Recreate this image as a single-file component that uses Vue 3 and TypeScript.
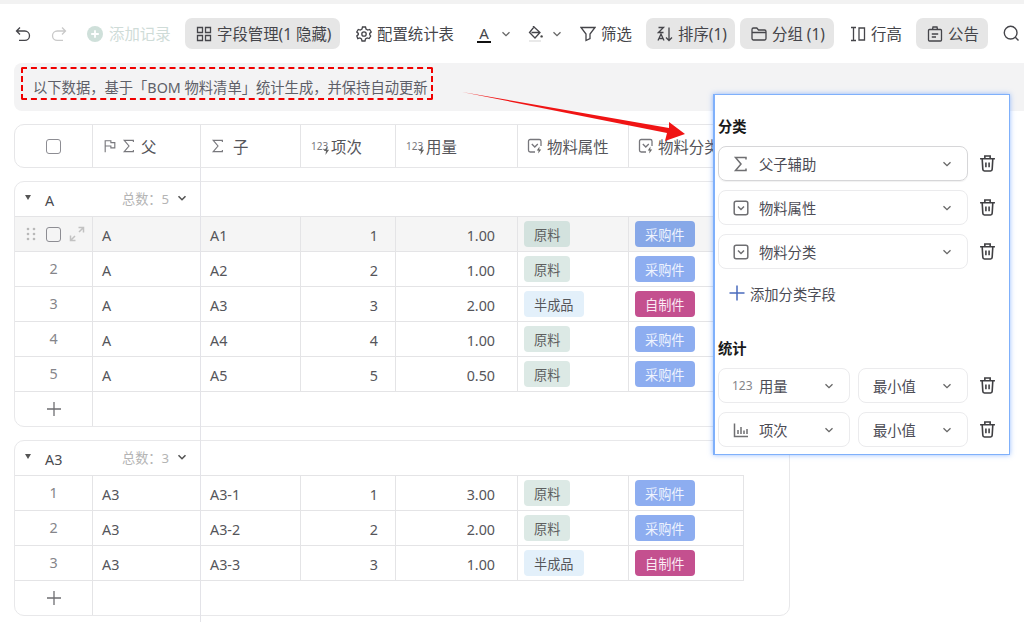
<template>
  <div class="page">
    <!-- Barra de ferramentas -->
    <header class="toolbar">
      <svg class="ico undo" viewBox="0 0 16 16"><path :d="icons.undo" /></svg>
      <svg class="ico redo off" viewBox="0 0 16 16"><path :d="icons.redo" /></svg>
      <span class="tb-add">
        <svg class="ico" viewBox="0 0 16 16"><circle cx="8" cy="8" r="8" fill="#cfe0da" stroke="none" /><path d="M8 4.200v7.600M4.200 8h7.600" stroke="#fff" stroke-width="1.800" /></svg>
        添加记录
      </span>
      <span class="tb-btn on fields">
        <svg class="ico" viewBox="0 0 16 16"><path :d="icons.grid" /></svg>
        字段管理(1 隐藏)
      </span>
      <span class="tb-btn config">
        <svg class="ico" viewBox="0 0 16 16"><path :d="icons.gear" /><circle cx="8" cy="8" r="2.200" /></svg>
        配置统计表
      </span>
      <span class="tb-color">
        <span class="letter-a">A</span>
        <svg class="chev" viewBox="0 0 10 10"><path d="M1.500 3.200 5 6.700l3.500-3.500" /></svg>
      </span>
      <span class="tb-color bucket">
        <svg class="ico" viewBox="0 0 16 16"><path :d="icons.bucket" /><path d="M1 15h12" stroke="#ddd" /><circle cx="13.600" cy="10.400" r="1.200" fill="#444" stroke="none" /></svg>
        <svg class="chev" viewBox="0 0 10 10"><path d="M1.500 3.200 5 6.700l3.500-3.500" /></svg>
      </span>
      <span class="tb-btn filter">
        <svg class="ico" viewBox="0 0 16 16"><path :d="icons.filter" /></svg>
        筛选
      </span>
      <span class="tb-btn on sort">
        <svg class="ico" viewBox="0 0 16 16"><path :d="icons.sort" /></svg>
        排序(1)
      </span>
      <span class="tb-btn on grouping">
        <svg class="ico" viewBox="0 0 16 16"><path :d="icons.folder" /></svg>
        分组 (1)
      </span>
      <span class="tb-btn height">
        <svg class="ico" viewBox="0 0 16 16"><path :d="icons.rowHeight" /></svg>
        行高
      </span>
      <span class="tb-btn on notice-btn">
        <svg class="ico" viewBox="0 0 16 16"><path :d="icons.notice" /></svg>
        公告
      </span>
      <svg class="ico search" viewBox="0 0 16 16"><circle cx="7.200" cy="7.200" r="6" /><path d="m11.600 11.600 3 3" /></svg>
    </header>

    <!-- Aviso -->
    <div class="notice">
      <span class="notice-text">以下数据，基于「BOM 物料清单」统计生成，并保持自动更新</span>
    </div>

    <!-- Tabela -->
    <section class="table">
      <div class="freeze"></div>

      <div class="thead">
        <div class="th center"><span class="check"></span></div>
        <div class="th">
          <svg class="ico-sm" viewBox="0 0 16 16"><path d="M2.500 15V2h6.500v2.200h4.500v6H9V8H2.500" /></svg>
          <svg class="ico-sm" viewBox="0 0 16 16"><path :d="icons.sigma" /></svg>
          <span>父</span>
        </div>
        <div class="th">
          <svg class="ico-sm" viewBox="0 0 16 16"><path :d="icons.sigma" /></svg>
          <span class="th-gap">子</span>
        </div>
        <div v-for="h in numHeads" :key="h" class="th">
          <span class="num-ico">123<svg viewBox="0 0 8 10"><path d="M5 0 1 5.600h2.400L2.800 10 7 4.200H4.400z" /></svg></span>
          {{ h }}
        </div>
        <div v-for="h in tagHeads" :key="h" class="th">
          <span class="sel-ico">
            <svg class="ico-sm" viewBox="0 0 16 16"><path d="M8 14H3.200A1.700 1.700 0 0 1 1.500 12.300V3.200A1.700 1.700 0 0 1 3.200 1.500h9.100A1.700 1.700 0 0 1 14 3.200V8M4.800 6 7.800 9l3-3" /><path class="bolt" d="M12.500 8.500 9.800 12.400h1.800l-.4 3.200 3-4.200h-1.900z" /></svg>
          </span>
          {{ h }}
        </div>
      </div>

      <div v-for="g in groups" :key="g.name" class="group">
        <div class="group-head">
          <div class="group-title">
            <span class="tri"></span>
            <span class="group-name">{{ g.name }}</span>
            <span class="group-total">总数：{{ g.rows.length }}</span>
            <svg class="chev dark" viewBox="0 0 10 10"><path d="M1.500 3.200 5 6.700l3.500-3.500" /></svg>
          </div>
        </div>

        <div
          v-for="(r, i) in g.rows"
          :key="r.child"
          class="row"
          :class="{ hover: g.name === 'A' && i === 0 }"
        >
          <div v-if="g.name === 'A' && i === 0" class="td first-hover">
            <svg class="dots" viewBox="0 0 10 14"><g fill="#b9b9b9"><circle cx="2" cy="2" r="1.300" /><circle cx="8" cy="2" r="1.300" /><circle cx="2" cy="7" r="1.300" /><circle cx="8" cy="7" r="1.300" /><circle cx="2" cy="12" r="1.300" /><circle cx="8" cy="12" r="1.300" /></g></svg>
            <span class="check"></span>
            <svg class="expand" viewBox="0 0 16 16"><path d="M9.500 1.500h5v5M14.500 1.500 10 6M6.500 14.500h-5v-5M1.500 14.500 6 10" /></svg>
          </div>
          <div v-else class="td seq">{{ i + 1 }}</div>
          <div class="td txt">{{ r.parent }}</div>
          <div class="td txt">{{ r.child }}</div>
          <div class="td txt right item">{{ r.item }}</div>
          <div class="td txt right qty">{{ r.qty.toFixed(2) }}</div>
          <div class="td"><span class="tag" :class="r.attr === '原料' ? 'tag-raw' : 'tag-semi'">{{ r.attr }}</span></div>
          <div class="td"><span class="tag" :class="r.kind === '采购件' ? 'tag-buy' : 'tag-make'">{{ r.kind }}</span></div>
        </div>

        <div class="add-row">
          <div class="add-cell"><svg class="plus" viewBox="0 0 16 16"><path d="M8 1v14M1 8h14" /></svg></div>
        </div>
      </div>
    </section>

    <!-- Seta da anotação -->
    <svg class="arrow" viewBox="0 0 240 60" width="240" height="60">
      <path d="M1 4 208 40v-6l16 12-20 7 2-8z" />
    </svg>

    <!-- Painel de configuração -->
    <aside class="panel">
      <h3 class="panel-title">分类</h3>
      <div v-for="(c, i) in categories" :key="c.label" class="panel-row">
        <div class="select wide" :class="{ active: i === 0 }">
          <svg v-if="c.sigma" class="sel-icon" viewBox="0 0 16 16"><path :d="icons.sigma" /></svg>
          <svg v-else class="sel-icon" viewBox="0 0 16 16"><rect x="1.200" y="1.200" width="13.600" height="13.600" rx="2" /><path d="m5 6.500 3 3 3-3" /></svg>
          <span class="sel-label">{{ c.label }}</span>
          <svg class="chev" viewBox="0 0 10 10"><path d="M1.500 3.200 5 6.700l3.500-3.500" /></svg>
        </div>
        <svg class="trash" viewBox="0 0 16 16"><path :d="icons.trash" /></svg>
      </div>
      <div class="panel-add">
        <svg class="add-plus" viewBox="0 0 16 16"><path d="M8 .5v15M.5 8h15" /></svg>
        添加分类字段
      </div>

      <h3 class="panel-title stat">统计</h3>
      <div v-for="s in stats" :key="s.label" class="panel-row">
        <div class="select field">
          <span v-if="s.num" class="sel-num">123</span>
          <svg v-else class="sel-icon" viewBox="0 0 16 16"><path d="M1.500 1.500v13h13.500M5 8v4M8 5v7M11 8.500V12M14 7v5" /></svg>
          <span class="sel-label">{{ s.label }}</span>
          <svg class="chev" viewBox="0 0 10 10"><path d="M1.500 3.200 5 6.700l3.500-3.500" /></svg>
        </div>
        <div class="select agg">
          <span class="sel-label">最小值</span>
          <svg class="chev" viewBox="0 0 10 10"><path d="M1.500 3.200 5 6.700l3.500-3.500" /></svg>
        </div>
        <svg class="trash" viewBox="0 0 16 16"><path :d="icons.trash" /></svg>
      </div>
    </aside>
  </div>
</template>

<script setup lang="ts">
interface Row {
  parent: string
  child: string
  item: number
  qty: number
  attr: string
  kind: string
}

interface Group {
  name: string
  rows: Row[]
}

const icons = {
  undo: 'M5 1.500 1.500 5 5 8.500M1.500 5h8.300a4.700 4.700 0 0 1 0 9.400H4',
  redo: 'M11 1.500 14.500 5 11 8.500M14.500 5H6.200a4.700 4.700 0 0 0 0 9.400H12',
  grid: 'M1.500 1.500h5v5h-5zM9.500 1.500h5v5h-5zM1.500 9.500h5v5h-5zM9.500 9.500h5v5h-5z',
  gear: 'M6.500 1h3l.5 2 1.700 1 2-.6 1.500 2.600-1.500 1.400v1.200L14.700 10l-1.500 2.600-2-.6-1.700 1-.5 2h-3l-.5-2-1.700-1-2 .6L.8 10l1.500-1.400V7.400L.8 6l1.500-2.600 2 .6L6 3z',
  bucket: 'M6 1 1.500 6.500 7 12l5-5.500zM3.500 6.500h8M6 1 5 0',
  filter: 'M1 1.500h14L10 8v4.500l-4 2V8z',
  sort: 'M1.500 1.500h5l-5 5h5M1 14.500 4 8l3 6.500M2 12.500h4M12 1.500v13M9 11.500l3 3 3-3',
  folder: 'M1 3.500A1.500 1.500 0 0 1 2.500 2h3.300l1.700 2h6A1.500 1.500 0 0 1 15 5.500v7a1.500 1.500 0 0 1-1.500 1.500h-11A1.500 1.500 0 0 1 1 12.500zM1 6.500h14',
  rowHeight: 'M1 1.500h5M1 14.500h5M3.500 1.500v13M9 2h5.500v12H9z',
  notice: 'M2.500 3.500h11a1 1 0 0 1 1 1v9.500a1 1 0 0 1-1 1h-11a1 1 0 0 1-1-1V4.500a1 1 0 0 1 1-1zM5.500 3.500 6 1h4l.5 2.500M4.800 8h6.400M4.800 11h4.200',
  sigma: 'M13 3.500V1.500H2.500L8 8l-5.500 6.500H13v-2',
  trash: 'M1 3.500h14M5.500 3.500V1h5v2.500M3 3.500l.6 10a1.500 1.500 0 0 0 1.500 1.500h5.800a1.500 1.500 0 0 0 1.500-1.500l.6-10M6.500 7v4.500M9.500 7v4.500',
}

const numHeads = ['项次', '用量']
const tagHeads = ['物料属性', '物料分类']

const groups: Group[] = [
  {
    name: 'A',
    rows: [
      { parent: 'A', child: 'A1', item: 1, qty: 1, attr: '原料', kind: '采购件' },
      { parent: 'A', child: 'A2', item: 2, qty: 1, attr: '原料', kind: '采购件' },
      { parent: 'A', child: 'A3', item: 3, qty: 2, attr: '半成品', kind: '自制件' },
      { parent: 'A', child: 'A4', item: 4, qty: 1, attr: '原料', kind: '采购件' },
      { parent: 'A', child: 'A5', item: 5, qty: 0.5, attr: '原料', kind: '采购件' },
    ],
  },
  {
    name: 'A3',
    rows: [
      { parent: 'A3', child: 'A3-1', item: 1, qty: 3, attr: '原料', kind: '采购件' },
      { parent: 'A3', child: 'A3-2', item: 2, qty: 2, attr: '原料', kind: '采购件' },
      { parent: 'A3', child: 'A3-3', item: 3, qty: 1, attr: '半成品', kind: '自制件' },
    ],
  },
]

const categories = [
  { label: '父子辅助', sigma: true },
  { label: '物料属性', sigma: false },
  { label: '物料分类', sigma: false },
]

const stats = [
  { label: '用量', num: true },
  { label: '项次', num: false },
]
</script>

<style>
html,
body {
  margin: 0;
  background: #fff;
}
</style>

<style scoped>
.page {
  position: relative;
  width: 1024px;
  height: 622px;
  overflow: hidden;
  border-top: 4px solid #f2f2f2;
  box-sizing: border-box;
  background: #fff;
  font-family: 'Noto Sans', 'Noto Sans CJK SC', sans-serif;
  color: #4a4a4f;
}

svg {
  fill: none;
  stroke: currentColor;
  stroke-width: 1.300;
  flex: none;
}

.toolbar {
  display: flex;
  align-items: center;
  height: 59px;
  padding-left: 15px;
  font-size: 15.400px;
  white-space: nowrap;
  color: #45454a;
}

.ico {
  width: 16px;
  height: 16px;
}

.undo {
  margin-right: 20px;
}

.redo.off {
  color: #c9c9c9;
  margin-right: 20px;
}

.tb-add {
  display: inline-flex;
  align-items: center;
  gap: 6px;
  width: 98px;
  color: #cfdcd8;
}

.tb-btn {
  display: inline-flex;
  align-items: center;
  gap: 5px;
  height: 31px;
  border-radius: 7px;
  box-sizing: border-box;
  padding: 0 5px;
}

.tb-btn.on {
  background: #e6e6e6;
}

.fields {
  width: 155px;
  padding-left: 11px;
}

.config {
  margin-left: 11px;
  width: 99px;
}

.tb-color {
  display: inline-flex;
  align-items: center;
}

.letter-a {
  display: inline-block;
  width: 14px;
  margin-left: 27px;
  margin-right: 10px;
  border-bottom: 2px solid #111;
  line-height: 16px;
  font-size: 15px;
  text-align: center;
}

.chev {
  width: 10px;
  height: 10px;
  color: #666;
}

.chev.dark {
  color: #555;
  stroke-width: 1.600;
}

.bucket {
  margin-left: 17px;
}

.bucket .chev {
  margin-left: 8px;
}

.filter {
  margin-left: 13px;
  width: 62px;
}

.sort {
  margin-left: 9px;
  width: 89px;
  padding-left: 11px;
}

.grouping {
  margin-left: 5px;
  width: 94px;
  padding-left: 11px;
}

.height {
  margin-left: 11px;
  width: 61px;
}

.notice-btn {
  margin-left: 10px;
  width: 72px;
  padding-left: 11px;
}

.search {
  width: 17px;
  height: 17px;
  margin-left: 15px;
}

.notice {
  height: 48px;
  margin-left: 14px;
  border-radius: 8px 0 0 8px;
  background: #f3f3f4;
  padding: 4px 0 0 7px;
  box-sizing: border-box;
}

.notice-text {
  display: inline-block;
  height: 33px;
  box-sizing: border-box;
  border: 2px dashed #f00000;
  border-radius: 2px;
  padding: 8px 3px 0 10px;
  font-size: 14.300px;
  line-height: 22px;
  color: #5e5f68;
  white-space: nowrap;
}

.table {
  position: relative;
  width: 776px;
  margin: 13px 0 0 14px;
}

.freeze {
  position: absolute;
  left: 186px;
  top: 44px;
  width: 1px;
  height: 460px;
  background: #e3e3e8;
  z-index: 1;
}

.thead {
  display: grid;
  grid-template-columns: 78px 108px 100px 95px 122px 111px 1fr;
  height: 44px;
  border: 1px solid #e6e6e8;
  border-radius: 10px;
  box-sizing: border-box;
  font-size: 15.400px;
  color: #55555a;
}

.th {
  display: flex;
  align-items: center;
  gap: 5px;
  padding-left: 10px;
  border-right: 1px solid #e4e4e6;
  white-space: nowrap;
}

.th:last-child {
  border-right: 0;
}

.th.center {
  justify-content: center;
  padding-left: 0;
}

.check {
  display: inline-block;
  width: 15px;
  height: 15px;
  box-sizing: border-box;
  border: 1.300px solid #8d8d93;
  border-radius: 3px;
}

.ico-sm {
  width: 14px;
  height: 14px;
  color: #77777c;
}

.th-gap {
  margin-left: 3px;
}

.num-ico {
  position: relative;
  width: 18px;
  font-size: 10px;
  color: #77777c;
  margin-right: -3px;
}

.num-ico svg {
  position: absolute;
  right: -1px;
  top: 7px;
  width: 7px;
  height: 9px;
  fill: #666;
  stroke: none;
}

.sel-ico {
  display: inline-flex;
  width: 16px;
  margin-left: -1px;
  margin-right: -1px;
}

.sel-ico .ico-sm {
  width: 16px;
  height: 16px;
}

.bolt {
  fill: #666;
  stroke: none;
}

.group-head {
  height: 35px;
  box-sizing: border-box;
  border-bottom: 1px solid #e4e4e6;
  width: 729px;
}

.group {
  margin-top: 13px;
  border: 1px solid #e8e8ea;
  border-radius: 10px;
  overflow: hidden;
}

.group-title {
  display: flex;
  align-items: center;
  width: 186px;
  height: 34px;
  padding-left: 10px;
  box-sizing: border-box;
}

.tri {
  width: 0;
  height: 0;
  border-left: 3.500px solid transparent;
  border-right: 3.500px solid transparent;
  border-top: 5px solid #555;
  margin-top: -3px;
}

.group-name {
  margin-left: 14px;
  width: 77px;
  font-size: 14.300px;
  padding-top: 3px;
}

.group-total {
  width: 55px;
  font-size: 13.200px;
  color: #b4b4b4;
  white-space: nowrap;
  margin-top: -2px;
}

.group-title .chev {
  margin-top: -2px;
}

.row {
  display: grid;
  grid-template-columns: 78px 108px 100px 95px 122px 111px 115px;
  height: 35px;
  width: 729px;
}

.row.hover {
  background: #f5f5f5;
}

.td {
  display: flex;
  align-items: center;
  box-sizing: border-box;
  border-right: 1px solid #e4e4e6;
  border-bottom: 1px solid #e4e4e6;
  padding: 0 6px;
  font-size: 14.300px;
  min-width: 0;
}

.td.seq {
  justify-content: center;
  padding: 0 0 2px;
  color: #85858a;
}

.td.txt {
  padding: 3px 9px 0;
  color: #55555a;
}

.td.right {
  justify-content: flex-end;
}

.td.item {
  padding-right: 17px;
}

.td.qty {
  padding-right: 22px;
}

.first-hover {
  gap: 0;
  padding: 0 0 0 11px;
}

.dots {
  width: 10px;
  height: 14px;
  stroke: none;
  margin-right: 10px;
}

.expand {
  width: 16px;
  height: 16px;
  color: #c2c2c2;
  stroke-width: 1.500;
  margin-left: 8px;
}

.tag {
  display: inline-flex;
  align-items: center;
  height: 26px;
  padding: 0 10px;
  border-radius: 4px;
  font-size: 13.200px;
  white-space: nowrap;
}

.tag-raw {
  background: #dce9e5;
  color: #5e5f5f;
}

.hover .tag-raw {
  background: #d3e2de;
}

.tag-semi {
  background: #e3f0fa;
  color: #55565a;
}

.tag-buy {
  background: #8dadf0;
  color: #eef3fe;
}

.hover .tag-buy {
  background: #87a8e8;
}

.tag-make {
  background: #c4508f;
  color: #fbeaf3;
}

.add-row {
  height: 34px;
  width: 729px;
  box-sizing: border-box;
}

.add-cell {
  display: flex;
  align-items: center;
  justify-content: center;
  width: 78px;
  height: 100%;
  border-right: 1px solid #e4e4e6;
  box-sizing: border-box;
}

.plus {
  width: 16px;
  height: 16px;
  color: #6e6e72;
}

.arrow {
  position: absolute;
  left: 461px;
  top: 84px;
  z-index: 3;
}

.arrow path {
  fill: #f01414;
  stroke: none;
}

.panel {
  position: absolute;
  left: 713px;
  top: 90px;
  width: 297px;
  height: 361px;
  box-sizing: border-box;
  padding: 0 3px 0 3px;
  background: #fff;
  border: 1px solid #7fb0fb;
  border-left-width: 2px;
  box-shadow: 0 0 5px rgba(90, 150, 255, 0.65);
  z-index: 2;
  font-size: 14.300px;
  color: #4c4c55;
}

.panel-title {
  margin: 22px 0 9px;
  font-size: 14.300px;
  font-weight: 700;
  line-height: 20px;
  color: #1a1a1a;
}

.panel-title.stat {
  margin-top: 34px;
  margin-bottom: 9px;
}

.panel-row {
  display: flex;
  align-items: center;
  gap: 8px;
  margin-bottom: 9px;
}

.select {
  display: flex;
  align-items: center;
  height: 35px;
  box-sizing: border-box;
  border: 1px solid #ebebed;
  border-radius: 8px;
  padding: 0 15px 0 14px;
}

.select.active {
  border-color: #d6d6d8;
  box-shadow: 0 1px 1px rgba(0, 0, 0, 0.06);
}

.select .chev {
  margin-left: auto;
}

.wide {
  width: 250px;
}

.field {
  width: 132px;
}

.agg {
  width: 110px;
}

.sel-icon {
  width: 16px;
  height: 16px;
  color: #6f6f72;
  stroke-width: 1.500;
  margin-right: 10px;
}

.sel-num {
  width: 26px;
  font-size: 12px;
  color: #85858a;
  margin-left: -1px;
  margin-right: 1px;
}

.sel-label {
  white-space: nowrap;
}

.trash {
  width: 17px;
  height: 17px;
  margin-left: 3px;
  color: #3f3f42;
  stroke-width: 1.500;
}

.panel-add {
  display: flex;
  align-items: center;
  gap: 5px;
  height: 24px;
  margin-top: 12px;
  padding-left: 11px;
}

.add-plus {
  width: 16px;
  height: 16px;
  color: #4a6bbd;
  stroke-width: 1.500;
}
</style>
